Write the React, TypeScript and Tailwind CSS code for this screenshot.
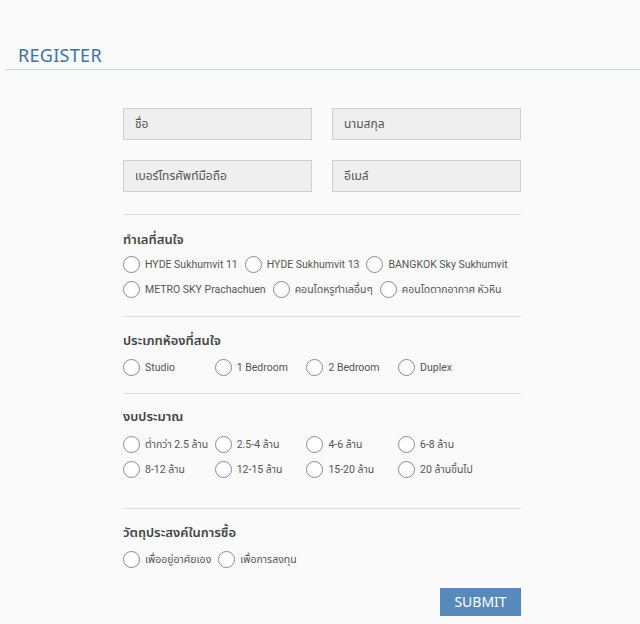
import React from "react";

const font = { fontFamily: '"Noto Sans", "Noto Sans Thai", "DejaVu Sans", sans-serif' };
const labelFont = { fontFamily: 'Roboto, "Noto Sans Thai", "Noto Sans", sans-serif' };

function Radio({ label, name, fixed }: { label: string; name: string; fixed?: boolean }) {
  return (
    <label className={`flex items-center h-[25px] ${fixed ? "w-[91.7px]" : ""}`}>
      <span className="inline-block w-[17px] h-[17px] rounded-full border border-[#8a8a8a] bg-white shrink-0" />
      <span className="ml-[5px] text-[10.5px] text-[#555] whitespace-nowrap" style={labelFont}>{label}</span>
      <input type="radio" name={name} className="hidden" />
    </label>
  );
}

function Heading({ children }: { children: React.ReactNode }) {
  return <div className="text-[13px] font-semibold text-[#444] leading-[20px]">{children}</div>;
}

function Hr() {
  return <div className="h-px bg-[#dcdcdc]" />;
}

function Input({ ph }: { ph: string }) {
  return (
    <div className="h-[32px] bg-[#efefef] border border-[#cfcfcf] flex items-center px-[11px] text-[12px] text-[#555]">
      {ph}
    </div>
  );
}

export default function App() {
  return (
    <div className="w-[640px] h-[624px] bg-[#fafafa] overflow-hidden" style={font}>
      <div className="pt-[43px] pl-[6px]">
        <div className="pl-[12px] text-[18px] leading-[24px] text-[#3b72aa] tracking-[0.3px]">REGISTER</div>
        <div className="mt-[2px] h-px bg-[#c3d6df]" />
      </div>
      <div className="w-[398px] ml-[123px] mt-[38px]">
        <div className="grid grid-cols-2 gap-x-[20px] gap-y-[20px]">
          <Input ph="ชื่อ" />
          <Input ph="นามสกุล" />
          <Input ph="เบอร์โทรศัพท์มือถือ" />
          <Input ph="อีเมล์" />
        </div>
        <div className="mt-[22px]"><Hr /></div>
        <div className="mt-[14px]"><Heading>ทำเลที่สนใจ</Heading></div>
        <div className="mt-[3px] flex flex-wrap gap-x-[7px]">
          <Radio name="loc" label="HYDE Sukhumvit 11" />
          <Radio name="loc" label="HYDE Sukhumvit 13" />
          <Radio name="loc" label="BANGKOK Sky Sukhumvit" />
          <Radio name="loc" label="METRO SKY Prachachuen" />
          <Radio name="loc" label="คอนโดหรูทำเลอื่นๆ" />
          <Radio name="loc" label="คอนโดตากอากาศ หัวหิน" />
        </div>
        <div className="mt-[14px]"><Hr /></div>
        <div className="mt-[13px]"><Heading>ประเภทห้องที่สนใจ</Heading></div>
        <div className="mt-[5px] flex flex-wrap">
          <Radio fixed name="room" label="Studio" />
          <Radio fixed name="room" label="1 Bedroom" />
          <Radio fixed name="room" label="2 Bedroom" />
          <Radio fixed name="room" label="Duplex" />
        </div>
        <div className="mt-[13px]"><Hr /></div>
        <div className="mt-[12px]"><Heading>งบประมาณ</Heading></div>
        <div className="mt-[6px] flex flex-wrap">
          <Radio fixed name="budget" label="ต่ำกว่า 2.5 ล้าน" />
          <Radio fixed name="budget" label="2.5-4 ล้าน" />
          <Radio fixed name="budget" label="4-6 ล้าน" />
          <Radio fixed name="budget" label="6-8 ล้าน" />
          <Radio fixed name="budget" label="8-12 ล้าน" />
          <Radio fixed name="budget" label="12-15 ล้าน" />
          <Radio fixed name="budget" label="15-20 ล้าน" />
          <Radio fixed name="budget" label="20 ล้านขึ้นไป" />
        </div>
        <div className="mt-[26px]"><Hr /></div>
        <div className="mt-[13px]"><Heading>วัตถุประสงค์ในการซื้อ</Heading></div>
        <div className="mt-[5px] flex flex-wrap gap-x-[7px]">
          <Radio name="purpose" label="เพื่ออยู่อาศัยเอง" />
          <Radio name="purpose" label="เพื่อการลงทุน" />
        </div>
        <div className="mt-[16px] flex justify-end">
          <button className="w-[81px] h-[28px] bg-[#5789bb] text-white text-[14px] leading-[28px]">SUBMIT</button>
        </div>
      </div>
    </div>
  );
}
